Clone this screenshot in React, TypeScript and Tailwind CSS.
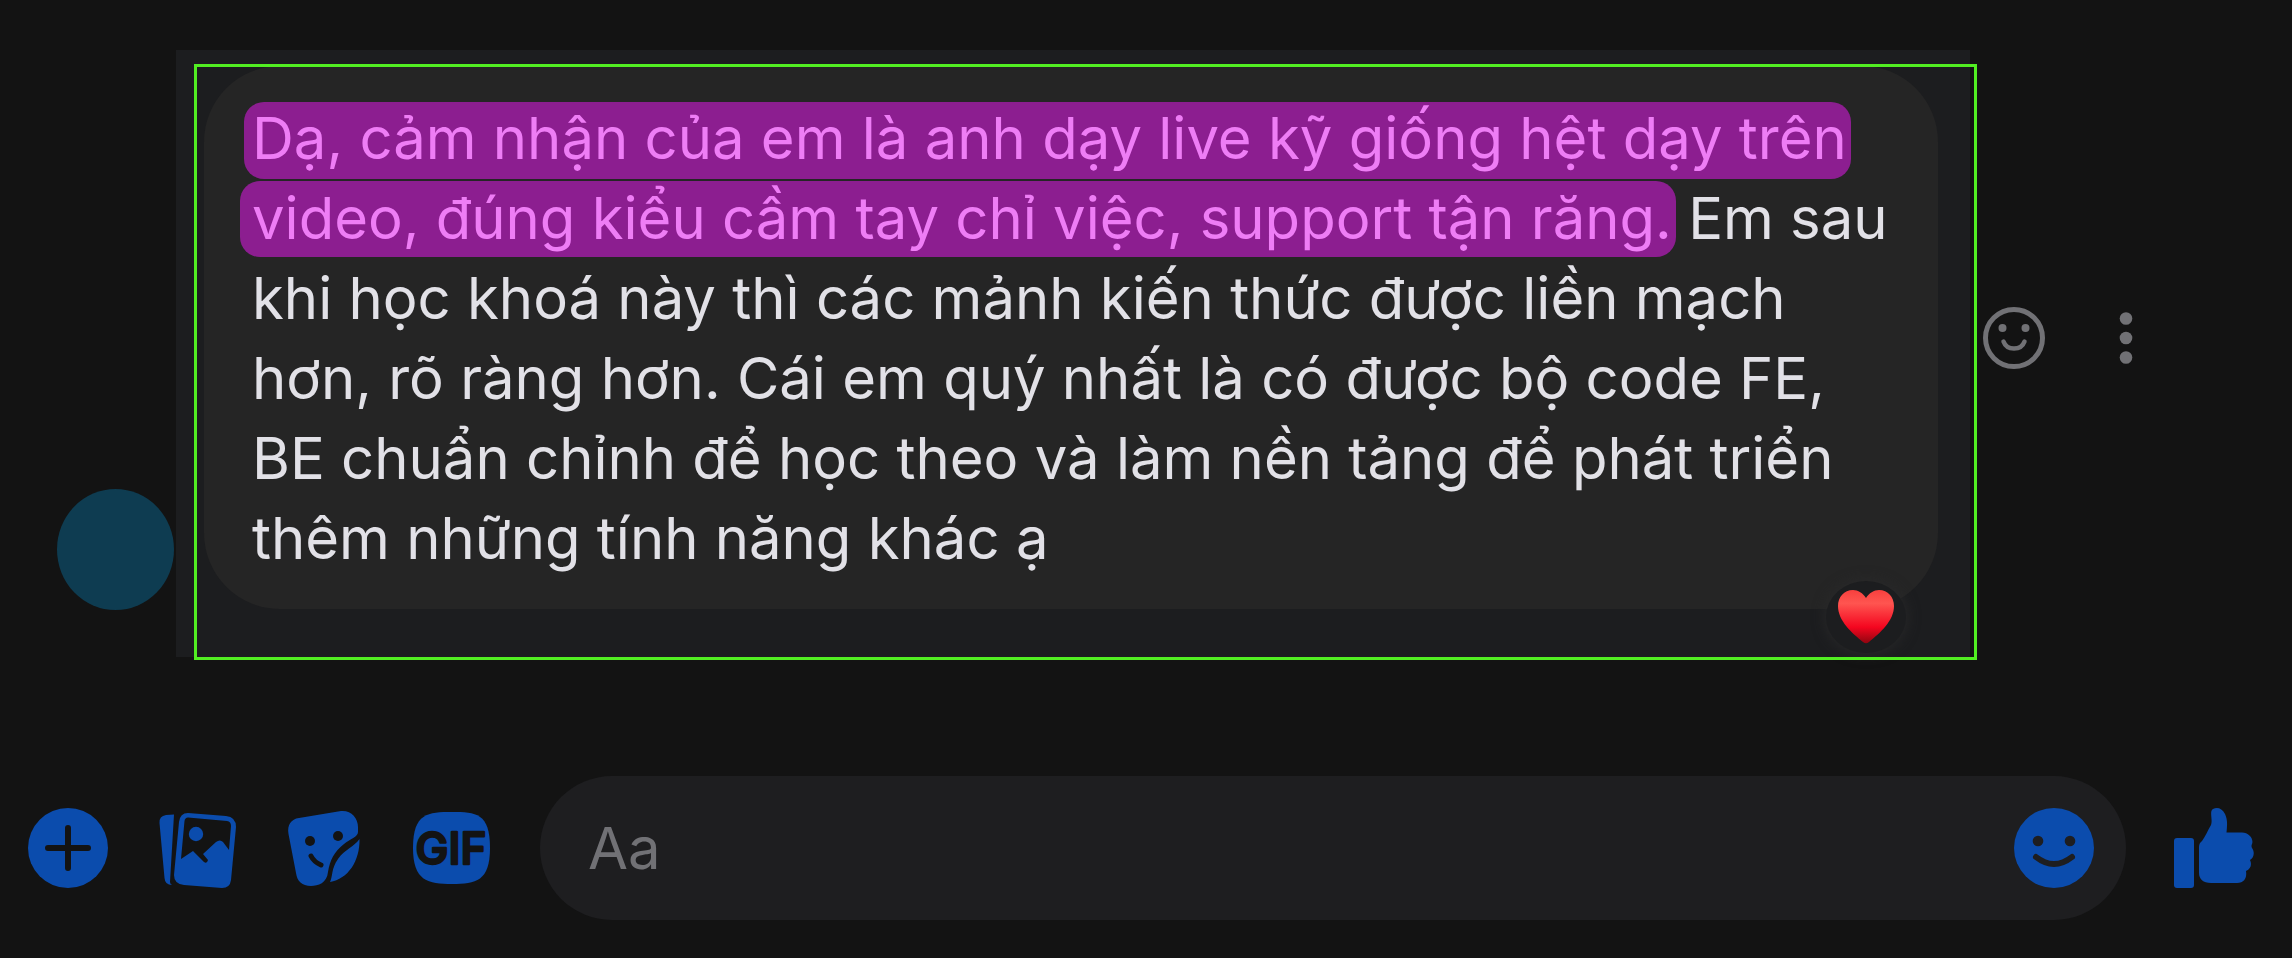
import type { ReactNode } from 'react';

const FONT = "font-[Inter,'Noto_Sans','Liberation_Sans',sans-serif]";

function IconButton({ label, className = '', children }: { label: string; className?: string; children: ReactNode }) {
  return (
    <button type="button" aria-label={label} className={`shrink-0 cursor-pointer ${className}`}>
      {children}
    </button>
  );
}

function Highlight({ className, children }: { className: string; children: ReactNode }) {
  return <span className={`-mr-1 rounded-[20px] bg-[#8c1e90] pr-1 text-[#ee7df5] ${className}`}>{children}</span>;
}

function PlusIcon() {
  return (
    <svg viewBox="0 0 80 80" className="size-20">
      <circle cx="40" cy="40" r="40" fill="#0b4cad" />
      <path d="M40 20v40M20 40h40" stroke="#131313" strokeWidth="6" strokeLinecap="round" />
    </svg>
  );
}

function PhotosIcon() {
  return (
    <svg viewBox="0 0 80 80" className="size-20" fill="#0b4cad">
      <path d="M18 6.500 L14 74 Q14 76 16 77 Q9 77 8.500 70 L3.500 15 Q3 8 10 7 Z" />
      <path
        fillRule="evenodd"
        d="M32 5 L70 8 Q80 9 80 19 L75 72 Q74 80 66 80 L28 77 Q18 76 18 67 L23 14 Q24 5 32 5 Z M32 9.500 Q29 9.500 28.500 13 L25 51 L37 43 L48 54 Q51 56 52 52 L47 46 L60 34 Q64 31 67 34 L73 42 L75 18 Q75 13.500 71 13 Z"
      />
      <circle cx="40" cy="26" r="7.200" />
    </svg>
  );
}

function StickerIcon() {
  return (
    <svg viewBox="0 0 80 80" className="size-20">
      <path
        d="M15 10 L57 3 C67 2 74 10 74 19 V24 C74 29 66 31 60 36 C50 44 46 52 44 64 C43 75 34 78 27 78 C18 78 13 73 12 65 L4.500 26 C3 17 7 11 15 10 Z"
        fill="#0b4cad"
      />
      <path d="M75.500 31 C76 53 64 71 46 74 C49 68 47 61 54 51 C61 41 70 39 75.500 31 Z" fill="#0b4cad" />
      <circle cx="26" cy="33" r="5" fill="#131313" />
      <circle cx="54" cy="28" r="5" fill="#131313" />
      <path d="M27 48 Q30 54 37 57" fill="none" stroke="#131313" strokeWidth="5" strokeLinecap="round" />
    </svg>
  );
}

function GifIcon() {
  return (
    <svg viewBox="0 0 80 80" className="size-20">
      <path d="M40 4 C64 4 78 5 78 40 C78 73 64 76 40 76 C16 76 1 73 1 40 C1 5 16 4 40 4 Z" fill="#0b4cad" />
      <text
        x="39"
        y="56"
        textAnchor="middle"
        className="font-[Inter,sans-serif]"
        fontSize="44"
        fontWeight="500"
        fill="#131313"
        stroke="#131313"
        strokeWidth="2.500"
        strokeLinejoin="round"
      >
        GIF
      </text>
    </svg>
  );
}

function EmojiIcon() {
  return (
    <svg viewBox="0 0 80 80" className="size-20">
      <circle cx="40" cy="40" r="40" fill="#0b4cad" />
      <circle cx="24" cy="33" r="5.300" fill="#1e1e20" />
      <circle cx="56" cy="33" r="5.300" fill="#1e1e20" />
      <path d="M22 49 Q40 63 58 49" fill="none" stroke="#1e1e20" strokeWidth="6" strokeLinecap="round" />
    </svg>
  );
}

function LikeIcon() {
  return (
    <svg viewBox="0 0 80 80" className="size-20" fill="#0b4cad">
      <rect x="0" y="30" width="20" height="50" rx="3" />
      <path d="M25 39 Q25 35 28 33 C31 29 34 22 37 17 C39 12 35 3 39 1 C43 -1 48 0 51 6 C54 12 53 19 52.500 24.500 H68 C75 24.500 80 31 78 36 Q77 38 78 40 C81 44 80 50 76 52 C78 56 77 61 72 63 C73 69 71 75 63 75 H37 C29 75 25 71 25 65 Z" />
    </svg>
  );
}

function ReactIcon() {
  return (
    <svg viewBox="0 0 62 62" className="size-[62px]" fill="none" stroke="#717175">
      <circle cx="31" cy="31" r="28.500" strokeWidth="5" />
      <circle cx="19.500" cy="21" r="4" fill="#717175" stroke="none" />
      <circle cx="42.500" cy="21" r="4" fill="#717175" stroke="none" />
      <path d="M20.500 34.500 Q23 41.500 31 41.500 Q39 41.500 41.500 34.500" strokeWidth="4.500" strokeLinecap="round" />
    </svg>
  );
}

function MoreIcon() {
  return (
    <svg viewBox="0 0 12 52" className="h-[52px] w-3 overflow-visible" fill="#717175">
      <circle cx="6" cy="6.500" r="6.300" />
      <circle cx="6" cy="26" r="6.300" />
      <circle cx="6" cy="45.500" r="6.300" />
    </svg>
  );
}

function HeartIcon() {
  return (
    <svg viewBox="0 0 56 54" className="h-[54px] w-14">
      <defs>
        <linearGradient id="heart" x1="0" y1="0" x2="0" y2="1">
          <stop offset="0" stopColor="#f8403e" />
          <stop offset="0.250" stopColor="#ff5550" />
          <stop offset="0.700" stopColor="#f4061f" />
          <stop offset="1" stopColor="#8f0510" />
        </linearGradient>
      </defs>
      <path
        d="M28 8 C31 3 36 0 41 0 C50 0 56 7 56 16 C56 31 42 43 31 52 Q28 54.500 25 52 C14 43 0 31 0 16 C0 7 6 0 15 0 C20 0 25 3 28 8 Z"
        fill="url(#heart)"
      />
    </svg>
  );
}

function Message() {
  return (
    <div className="flex gap-0.5 pl-[57px] pr-40">
      <div className="mb-[47px] h-[121px] w-[117px] shrink-0 self-end rounded-[50%] bg-[#0e3c51]" />
      <div className="relative min-w-0 flex-1 bg-[#1c1d1f] pt-4 pr-8 pb-12 pl-7">
        <div className="relative rounded-[76px] bg-[#252525] px-12 pt-8 pb-[31px]">
          <p className="text-[58px] leading-[80px] text-[#e2e1e7]">
            <Highlight className="-ml-2 pt-px pb-1.5 pl-2">
              Dạ, cảm nhận của em là anh dạy live kỹ giống hệt dạy trên
            </Highlight>
            <br />
            <Highlight className="-ml-3 pt-0.5 pb-1 pl-3">video, đúng kiểu cầm tay chỉ việc, support tận răng.</Highlight>{' '}
            Em sau
            <br />
            khi học khoá này thì các mảnh kiến thức được liền mạch
            <br />
            hơn, rõ ràng hơn. Cái em quý nhất là có được bộ code FE,
            <br />
            BE chuẩn chỉnh để học theo và làm nền tảng để phát triển
            <br />
            thêm những tính năng khác ạ
          </p>
          {/* reaction badge */}
          <div className="absolute right-8 -bottom-11 flex h-[72px] w-20 items-center justify-center rounded-[50%] bg-[#1c1d1f] shadow-[0_0_14px_#2a2a2b]">
            <HeartIcon />
          </div>
        </div>
        {/* selection frame */}
        <div className="pointer-events-none absolute top-3.5 -right-[7px] -bottom-[3px] left-[18px] border-3 border-[#52ee22]" />
      </div>
      <div className="ml-[11px] flex shrink-0 items-center gap-[75px] pb-8">
        <IconButton label="React">
          <ReactIcon />
        </IconButton>
        <IconButton label="More">
          <MoreIcon />
        </IconButton>
      </div>
    </div>
  );
}

function Composer() {
  return (
    <form className="flex items-center gap-12 pl-7 pr-[38px]" onSubmit={e => e.preventDefault()}>
      <IconButton label="Open more actions">
        <PlusIcon />
      </IconButton>
      <IconButton label="Attach a photo">
        <PhotosIcon />
      </IconButton>
      <IconButton label="Choose a sticker">
        <StickerIcon />
      </IconButton>
      <IconButton label="Choose a GIF">
        <GifIcon />
      </IconButton>
      <div className="flex h-36 min-w-0 flex-1 items-center rounded-full bg-[#1e1e20] pr-8 pl-12">
        <input
          type="text"
          aria-label="Message"
          placeholder="Aa"
          className="h-20 min-w-0 flex-1 bg-transparent text-[58px] text-[#e2e1e7] outline-none placeholder:text-[#717175]"
        />
        <IconButton label="Choose an emoji">
          <EmojiIcon />
        </IconButton>
      </div>
      <IconButton label="Send a like">
        <LikeIcon />
      </IconButton>
    </form>
  );
}

export default function App() {
  return (
    <main className={`flex min-h-screen flex-col justify-between bg-[#131313] pt-[50px] pb-[38px] ${FONT}`}>
      <Message />
      <Composer />
    </main>
  );
}
